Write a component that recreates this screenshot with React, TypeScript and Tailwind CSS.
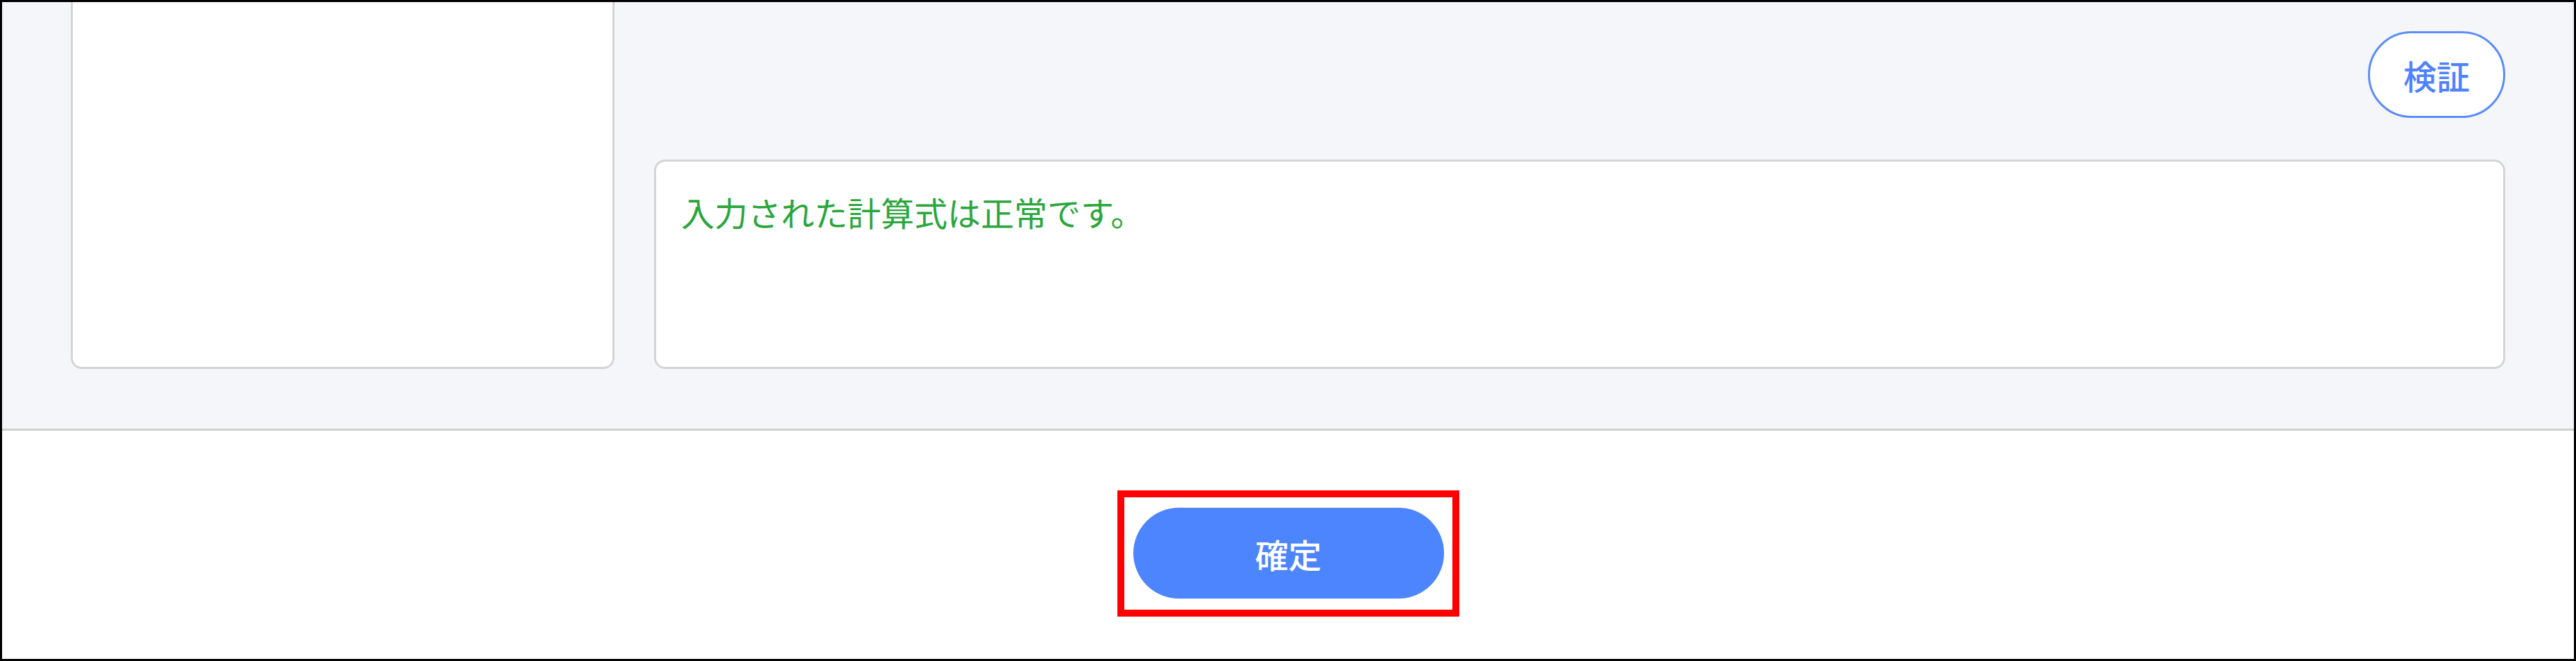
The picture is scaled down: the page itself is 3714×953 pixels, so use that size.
import React from 'react';

const App: React.FC = () => {
  const font = { fontFamily: '"Noto Sans CJK JP", "Noto Sans", sans-serif' };

  return (
    <div className="w-[3714px] h-[953px] border-[3px] border-black flex flex-col bg-white" style={font}>
      {/* formula area */}
      <div className="flex h-[615px] bg-[#f5f6fa] px-[99px] pb-[86px] gap-[57px]">
        <div className="w-[784px] shrink-0 bg-white border-[3px] border-t-0 border-[#d4d4d4] rounded-b-[16px]" />
        <div className="flex-1 flex flex-col pt-[42px]">
          <div className="flex justify-end">
            <button className="w-[198px] h-[125px] rounded-full border-[3px] border-[#5a8cfa] bg-white text-[#4f82ff] text-[48px] font-medium leading-none">
              検証
            </button>
          </div>
          <div className="mt-[60px] flex-1 bg-white border-[3px] border-[#d4d4d4] rounded-[16px] px-[36px] pt-[37px]">
            <p className="text-[#2aa63c] text-[48px] leading-[70px]">入力された計算式は正常です。</p>
          </div>
        </div>
      </div>

      {/* footer */}
      <div className="flex-1 border-t-[3px] border-[#cfcfcf] flex justify-center pt-[86px]">
        <div className="h-[182px] border-[10px] border-[#ff0000] pl-[13px] pr-[12px] pt-[15px]">
          <button className="w-[448px] h-[131px] rounded-full bg-[#4d85ff] text-white text-[48px] font-medium leading-none">
            確定
          </button>
        </div>
      </div>
    </div>
  );
};

export default App;
